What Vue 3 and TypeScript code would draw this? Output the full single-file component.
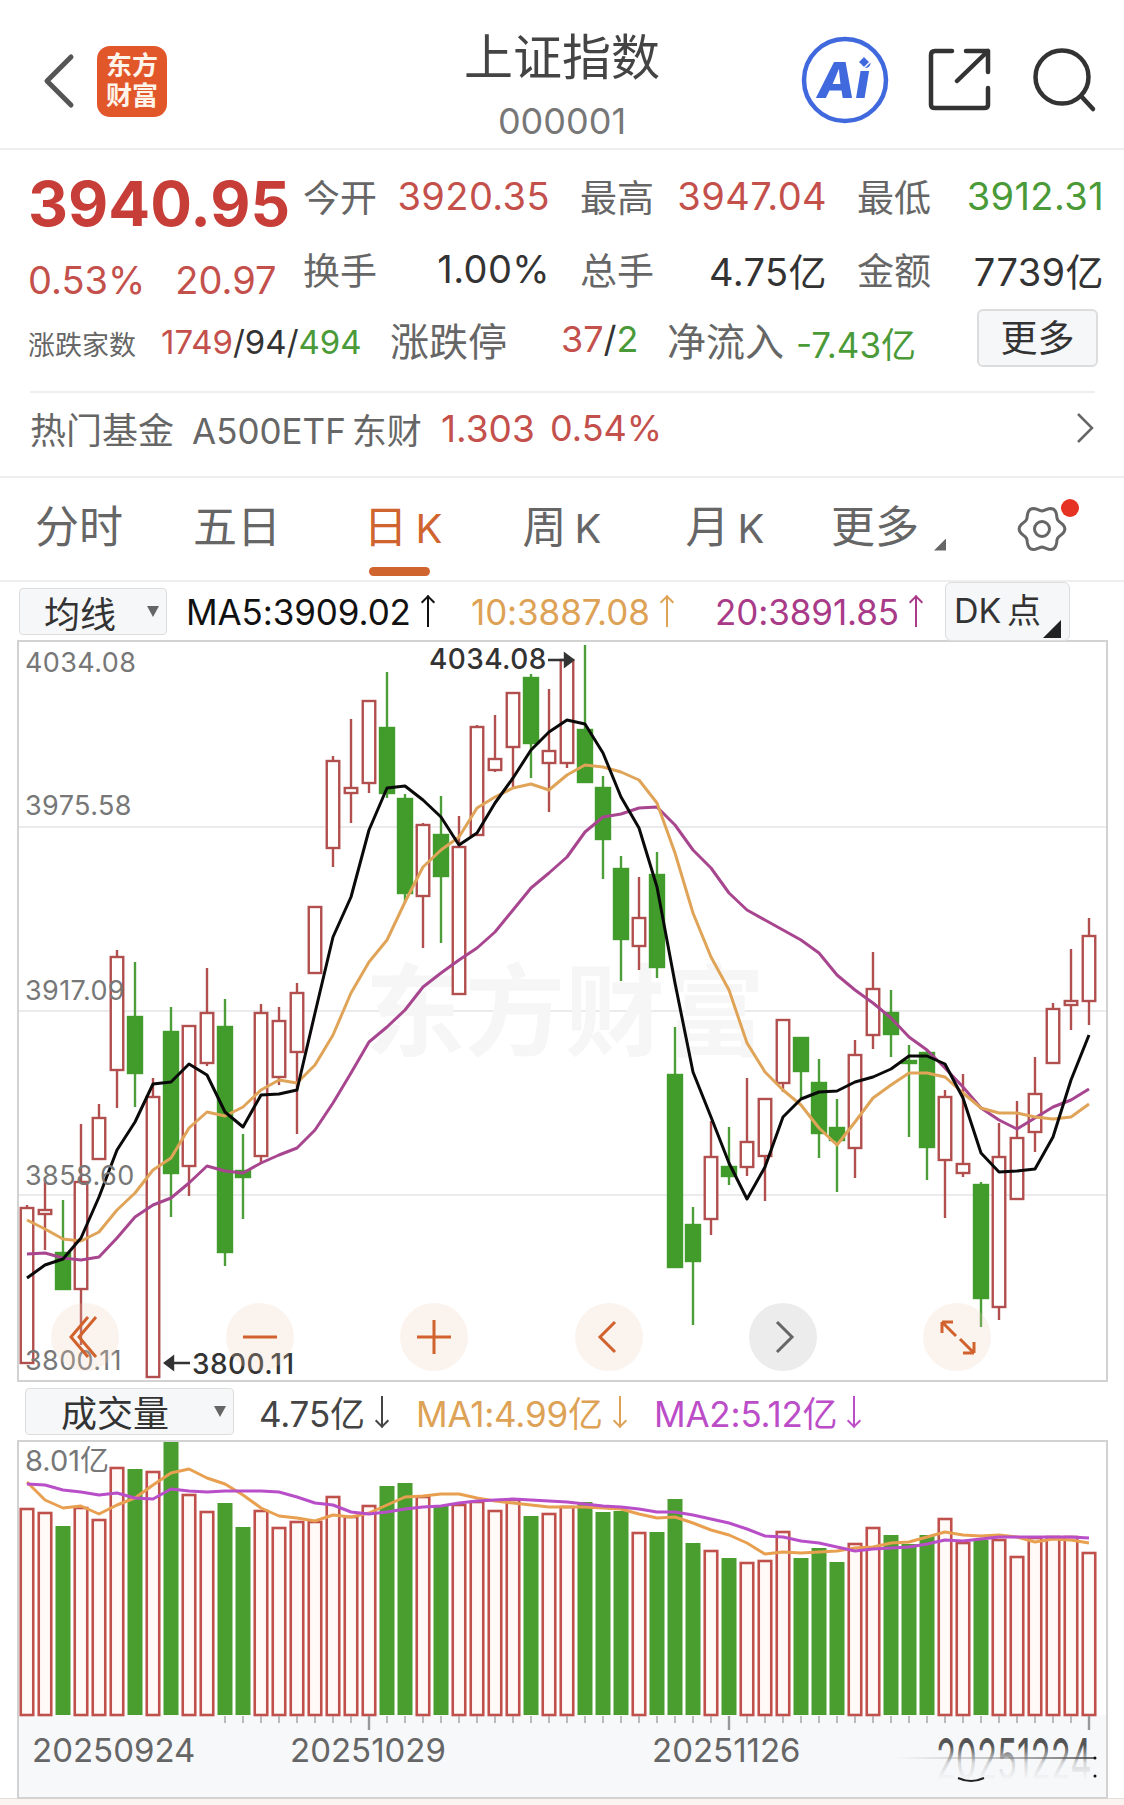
<template>
  <div class="page">
    <header class="top-bar">
      <div class="top-left">
        <svg class="back" width="34" height="56" viewBox="0 0 34 56">
          <path d="M30 4 L6 28 L30 52" fill="none" stroke="#555" stroke-width="5" stroke-linecap="round" stroke-linejoin="round" />
        </svg>
        <div class="logo"><span>东方</span><span>财富</span></div>
      </div>
      <div class="title-block">
        <div class="title">上证指数</div>
        <div class="code">000001</div>
      </div>
      <div class="top-right">
        <svg width="88" height="88" viewBox="0 0 88 88">
          <circle cx="44" cy="44" r="41" fill="none" stroke="#4169DE" stroke-width="4.5" />
          <text x="16" y="62" class="ai-text">Ai</text>
          <path d="M63 20 L69 26 L63 32 L57 26 Z" fill="#4169DE" stroke="#fff" stroke-width="1.5" />
        </svg>
        <svg class="share" width="64" height="64" viewBox="0 0 64 64">
          <path d="M24 3 H7 Q3 3 3 7 V57 Q3 60 7 60 H56 Q60 60 60 57 V40 M38 3 H60 V24 M60 3 L29 33" fill="none" stroke="#333" stroke-width="4.5" stroke-linecap="round" stroke-linejoin="round" />
        </svg>
        <svg class="search" width="66" height="66" viewBox="0 0 66 66">
          <circle cx="31" cy="30" r="26.5" fill="none" stroke="#333" stroke-width="4.5" />
          <path d="M50 49 L62 62" stroke="#333" stroke-width="4.5" stroke-linecap="round" />
        </svg>
      </div>
    </header>

    <section class="quote">
      <div class="quote-top">
        <div class="quote-left">
          <div class="price">3940.95</div>
          <div class="change"><span>0.53%</span><span>20.97</span></div>
        </div>
        <div class="quote-grid">
          <div v-for="item in stats" :key="item.label" class="stat">
            <span class="stat-label">{{ item.label }}</span>
            <span class="stat-value" :class="item.tone">{{ item.value }}</span>
          </div>
        </div>
      </div>
      <div class="quote-third">
        <span class="small-label">涨跌家数</span>
        <span class="counts"><i class="up">1749</i>/94/<i class="down">494</i></span>
        <span class="mid-label">涨跌停</span>
        <span class="limit"><i class="up">37</i>/<i class="down">2</i></span>
        <span class="flow-label">净流入</span>
        <span class="flow-value down">-7.43亿</span>
        <button class="more-btn">更多</button>
      </div>
      <div class="fund-row">
        <span class="fund-label">热门基金</span>
        <span class="fund-name">A500ETF 东财</span>
        <span class="fund-price up">1.303</span>
        <span class="fund-pct up">0.54%</span>
        <svg class="fund-arrow" width="20" height="32" viewBox="0 0 20 32">
          <path d="M3 2 L17 16 L3 30" fill="none" stroke="#666" stroke-width="2.5" />
        </svg>
      </div>
    </section>

    <nav class="tabs">
      <div class="tab">分时</div>
      <div class="tab">五日</div>
      <div class="tab active">日<span class="tab-k">K</span><b class="tab-line"></b></div>
      <div class="tab">周<span class="tab-k">K</span></div>
      <div class="tab">月<span class="tab-k">K</span></div>
      <div class="tab tab-more">更多<i class="tab-tri"></i></div>
      <svg class="gear" width="76" height="60" viewBox="0 0 76 60">
        <path :d="gearPath" fill="none" stroke="#666" stroke-width="3" />
        <circle cx="26" cy="33" r="7.5" fill="none" stroke="#666" stroke-width="3" />
        <circle cx="54" cy="12" r="9" fill="#E63222" />
      </svg>
    </nav>

    <div class="ma-row">
      <div class="select select-ma">均线<i class="select-arrow"></i></div>
      <span class="ma-item ma5">MA5:3909.02<i class="arrow up-arrow"></i></span>
      <span class="ma-item ma10">10:3887.08<i class="arrow up-arrow"></i></span>
      <span class="ma-item ma20">20:3891.85<i class="arrow up-arrow"></i></span>
      <div class="dk-btn">DK 点<i class="dk-tri"></i></div>
    </div>

    <div class="chart">
      <svg class="chart-svg" width="1089" height="740" viewBox="18 641 1089 740">
        <line v-for="y in gridLines" :key="y" x1="18" x2="1107" :y1="y" :y2="y" stroke="#ebebee" stroke-width="2" />
        <text x="365" y="1048" class="watermark">东方财富</text>
        <g v-for="c in candleRects" :key="c.x">
          <line :x1="c.x" :x2="c.x" :y1="c.high" :y2="c.low" :stroke="c.color" stroke-width="2.4" />
          <rect :x="c.x - c.w / 2" :y="c.top" :width="c.w" :height="c.h" :fill="c.fill" :stroke="c.stroke" stroke-width="2.4" />
        </g>
        <polyline :points="toPoints(ma20)" class="line" stroke="#A8458F" />
        <polyline :points="toPoints(ma10)" class="line" stroke="#E0A458" />
        <polyline :points="toPoints(ma5)" class="line" stroke="#0A0A0A" />
        <text v-for="t in priceLabels" :key="t.text" x="25" :y="t.y" class="axis-price">{{ t.text }}</text>

        <text x="429" y="669" class="mark">4034.08</text>
        <path d="M548 660 H572 M565 654 L573 660 L565 666 Z" fill="#333" stroke="#333" stroke-width="2.4" />
        <text x="192" y="1374" class="mark">3800.11</text>
        <path d="M190 1363 H166 M173 1357 L165 1363 L173 1369 Z" fill="#333" stroke="#333" stroke-width="2.4" />

        <g v-for="b in chartButtons" :key="b.x">
          <circle :cx="b.x" cy="1337" r="34" :fill="b.fill" />
          <path :d="b.d" fill="none" :stroke="b.stroke" stroke-width="3" />
        </g>
      </svg>
    </div>

    <div class="vol-row">
      <div class="select select-vol">成交量<i class="select-arrow"></i></div>
      <span class="vol-item vol-now">4.75亿<i class="arrow down-arrow"></i></span>
      <span class="vol-item vol-ma1">MA1:4.99亿<i class="arrow down-arrow"></i></span>
      <span class="vol-item vol-ma2">MA2:5.12亿<i class="arrow down-arrow"></i></span>
    </div>

    <div class="volume">
      <svg width="1089" height="357" viewBox="18 1441 1089 357">
        <defs>
          <linearGradient id="fade" x1="0" y1="0" x2="0" y2="1">
            <stop offset="0" stop-color="#f7f8fa" stop-opacity="0" />
            <stop offset="0.5" stop-color="#f7f8fa" stop-opacity="0.8" />
            <stop offset="1" stop-color="#f7f8fa" />
          </linearGradient>
          <linearGradient id="smear" x1="0" y1="0" x2="1" y2="0">
            <stop offset="0" stop-color="#999" stop-opacity="0" />
            <stop offset="0.3" stop-color="#999" stop-opacity="0.35" />
            <stop offset="1" stop-color="#444" stop-opacity="0.8" />
          </linearGradient>
        </defs>
        <rect x="18" y="1715" width="1089" height="83" fill="#f7f8fa" />
        <text x="25" y="1471" class="axis-vol">8.01亿</text>
        <rect v-for="b in volumeBars" :key="b.x" :x="b.x" :y="b.y" :width="b.w" :height="b.h" :fill="b.fill" :stroke="b.stroke" stroke-width="2.6" />
        <polyline :points="toPoints(volMa1)" class="line" stroke="#E8A050" />
        <polyline :points="toPoints(volMa2)" class="line" stroke="#B84FC8" />
        <line v-for="t in ticks" :key="t.x" :x1="t.x" :x2="t.x" y1="1716" :y2="t.y2" :stroke="t.major ? '#999' : '#aaa'" :stroke-width="t.major ? 2.4 : 1.6" />
        <text x="32" y="1762" class="date">20250924</text>
        <text x="290" y="1762" class="date">20251029</text>
        <text x="652" y="1762" class="date">20251126</text>
        <text x="936" y="1738" transform="translate(0 1738) scale(1 1.75) translate(0 -1738)" dy="24" class="date date-stretch">20251224</text>
        <rect x="892" y="1746" width="206" height="34" fill="url(#fade)" />
        <rect x="892" y="1780" width="206" height="18" fill="#f7f8fa" />
        <rect x="895" y="1757" width="200" height="2" fill="url(#smear)" />
        <path d="M958 1778 Q971 1784 984 1778" fill="none" stroke="#222" stroke-width="2" />
        <circle cx="1095" cy="1758" r="1.5" fill="#111" />
        <circle cx="1095" cy="1776" r="1.5" fill="#111" />
      </svg>
    </div>
    <div class="footer"></div>
  </div>
</template>

<script setup lang="ts">
import { computed } from 'vue'

const stats = [
  { label: '今开', value: '3920.35', tone: 'up' },
  { label: '最高', value: '3947.04', tone: 'up' },
  { label: '最低', value: '3912.31', tone: 'down' },
  { label: '换手', value: '1.00%', tone: '' },
  { label: '总手', value: '4.75亿', tone: '' },
  { label: '金额', value: '7739亿', tone: '' }
]

const gridLines = [827, 1011, 1195]
const priceLabels = [
  { text: '4034.08', y: 672 },
  { text: '3975.58', y: 815 },
  { text: '3917.09', y: 1000 },
  { text: '3858.60', y: 1185 },
  { text: '3800.11', y: 1370 }
]

const slot = (i: number) => 27 + 18 * i
const toPoints = (ys: number[]) => ys.map((y, i) => `${slot(i)},${y}`).join(' ')

// high, body top, body bottom, low, 1 = up (hollow red) / 0 = down (solid green)
const candles: [number, number, number, number, number][] = [
  [1205, 1208, 1363, 1363, 1], [1177, 1210, 1214, 1250, 1], [1200, 1253, 1289, 1289, 0], [1124, 1182, 1289, 1345, 1],
  [1104, 1118, 1159, 1159, 1], [950, 957, 1070, 1108, 1], [962, 1017, 1073, 1107, 0], [1078, 1097, 1377, 1377, 1],
  [1007, 1032, 1173, 1217, 0], [1026, 1026, 1166, 1196, 1], [968, 1013, 1063, 1066, 1], [999, 1027, 1252, 1266, 0],
  [1134, 1171, 1177, 1219, 0], [1004, 1013, 1156, 1163, 1], [1007, 1021, 1077, 1085, 1], [983, 993, 1052, 1134, 1],
  [907, 907, 973, 973, 1], [756, 761, 848, 867, 1], [719, 788, 793, 823, 1], [701, 701, 783, 793, 1],
  [672, 728, 793, 798, 0], [794, 799, 893, 903, 0], [823, 825, 896, 948, 1], [796, 835, 876, 943, 0],
  [816, 847, 994, 994, 1], [725, 727, 835, 835, 1], [715, 759, 770, 772, 1], [693, 693, 747, 788, 1],
  [674, 678, 743, 778, 0], [689, 751, 763, 812, 1], [660, 660, 763, 768, 1], [645, 730, 782, 782, 0],
  [776, 788, 839, 879, 0], [856, 869, 939, 981, 0], [877, 918, 946, 970, 1], [852, 875, 967, 978, 0],
  [1027, 1075, 1267, 1267, 0], [1207, 1225, 1261, 1325, 0], [1121, 1157, 1219, 1235, 1], [1127, 1167, 1176, 1185, 0],
  [1078, 1142, 1167, 1176, 1], [1099, 1099, 1156, 1201, 1], [1020, 1020, 1083, 1092, 1], [1037, 1038, 1071, 1098, 0],
  [1059, 1083, 1133, 1158, 0], [1099, 1128, 1140, 1192, 0], [1040, 1055, 1148, 1178, 1], [952, 989, 1035, 1049, 1],
  [990, 1013, 1034, 1057, 0], [1045, 1061, 1063, 1137, 0], [1049, 1053, 1147, 1180, 0], [1090, 1097, 1160, 1218, 1],
  [1074, 1164, 1173, 1177, 1], [1182, 1185, 1298, 1327, 0], [1123, 1157, 1307, 1320, 1], [1101, 1138, 1199, 1199, 1],
  [1057, 1094, 1132, 1152, 1], [1003, 1009, 1063, 1063, 1], [949, 1001, 1005, 1030, 1], [918, 936, 1001, 1025, 1]
]

const candleRects = computed(() =>
  candles.map(([high, top, bottom, low, up], i) => ({
    x: slot(i),
    high,
    low,
    top,
    h: bottom - top,
    w: up ? 12.5 : 14,
    color: up ? '#B14F4E' : '#4C9E38',
    fill: up ? '#fff' : '#419C2C',
    stroke: up ? '#B14F4E' : '#419C2C'
  }))
)

const ma5 = [
  1278, 1265, 1259, 1238, 1197, 1150, 1122, 1084, 1082, 1064, 1075, 1112, 1127, 1095, 1094, 1090, 1013, 937, 897, 830,
  788, 786, 800, 817, 845, 833, 803, 778, 750, 732, 720, 724, 753, 797, 828, 887, 983, 1072, 1117, 1163,
  1199, 1167, 1117, 1099, 1092, 1091, 1082, 1077, 1069, 1056, 1056, 1064, 1098, 1153, 1172, 1171, 1169, 1137, 1080, 1035
]
const ma10 = [
  1220, 1229, 1239, 1241, 1232, 1210, 1193, 1170, 1158, 1128, 1112, 1116, 1107, 1090, 1080, 1083, 1065, 1035, 993, 962,
  940, 902, 867, 850, 837, 808, 797, 788, 784, 790, 775, 765, 767, 772, 780, 803, 853, 913, 957, 990,
  1043, 1072, 1090, 1105, 1128, 1145, 1122, 1098, 1085, 1073, 1073, 1077, 1093, 1108, 1113, 1113, 1117, 1119, 1117, 1104
]
const ma20 = [
  1254, 1253, 1258, 1260, 1257, 1238, 1217, 1205, 1198, 1183, 1166, 1171, 1173, 1163, 1155, 1148, 1130, 1103, 1073, 1042,
  1027, 1010, 987, 973, 960, 948, 932, 910, 888, 873, 857, 832, 817, 814, 808, 807, 825, 850, 868, 893,
  910, 920, 930, 940, 953, 975, 990, 1003, 1018, 1037, 1050, 1068, 1087, 1108, 1120, 1129, 1118, 1107, 1100, 1089
]

const volTops = [
  1509, 1513, 1526, 1508, 1520, 1468, 1469, 1472, 1441, 1495, 1512, 1503, 1527, 1511, 1528, 1522, 1522, 1497, 1517, 1506,
  1486, 1483, 1497, 1506, 1505, 1502, 1511, 1500, 1516, 1514, 1507, 1502, 1512, 1511, 1533, 1532, 1499, 1543, 1551, 1558,
  1563, 1561, 1532, 1558, 1548, 1562, 1544, 1528, 1535, 1544, 1535, 1519, 1543, 1540, 1540, 1557, 1538, 1537, 1537, 1553
]
const volMa1 = [
  1482, 1500, 1508, 1506, 1514, 1505, 1498, 1485, 1473, 1469, 1478, 1484, 1495, 1508, 1516, 1518, 1521, 1515, 1517, 1513,
  1505, 1497, 1496, 1494, 1494, 1498, 1501, 1503, 1505, 1507, 1507, 1507, 1508, 1509, 1514, 1518, 1517, 1523, 1530, 1535,
  1543, 1554, 1552, 1553, 1552, 1551, 1548, 1547, 1543, 1542, 1537, 1532, 1535, 1536, 1535, 1537, 1542, 1539, 1540, 1543
]
const volMa2 = [
  1484, 1485, 1490, 1492, 1495, 1493, 1498, 1499, 1489, 1491, 1492, 1491, 1491, 1491, 1492, 1497, 1503, 1505, 1512, 1514,
  1512, 1509, 1507, 1506, 1503, 1501, 1500, 1499, 1500, 1501, 1502, 1504, 1506, 1507, 1509, 1512, 1512, 1515, 1519, 1523,
  1529, 1536, 1537, 1541, 1543, 1547, 1551, 1549, 1548, 1547, 1544, 1540, 1541, 1539, 1537, 1537, 1537, 1537, 1537, 1538
]

const volumeBars = computed(() =>
  volTops.map((top, i) => {
    const up = candles[i][4] === 1
    const w = up ? 12.5 : 15
    return {
      x: slot(i) - w / 2,
      y: top,
      w,
      h: 1715 - top,
      fill: up ? '#FFF9F8' : '#4A9E2F',
      stroke: up ? '#C0504C' : 'none'
    }
  })
)

const ticks = computed(() =>
  Array.from({ length: 49 }, (_, k) => {
    const i = k + 11
    const major = i === 19 || i === 39 || i === 59
    return { x: slot(i), y2: major ? 1730 : 1723, major }
  })
)

const chartButtons = [
  { x: 85, fill: 'rgba(240,205,185,0.24)', stroke: '#D2622D', d: 'M88 1317 L71 1337 L88 1357 M96 1317 L79 1337 L96 1357' },
  { x: 260, fill: 'rgba(240,205,185,0.24)', stroke: '#D2622D', d: 'M243 1337 H277' },
  { x: 434, fill: 'rgba(240,205,185,0.24)', stroke: '#D2622D', d: 'M417 1337 H451 M434 1320 V1354' },
  { x: 609, fill: 'rgba(240,205,185,0.24)', stroke: '#D2622D', d: 'M615 1322 L600 1337 L615 1352' },
  { x: 783, fill: '#ececec', stroke: '#666', d: 'M777 1322 L792 1337 L777 1352' },
  { x: 957, fill: 'rgba(240,205,185,0.24)', stroke: '#D2622D', d: 'M942 1322 L956 1336 M942 1322 H953 M942 1322 V1333 M974 1353 L960 1339 M974 1353 H963 M974 1353 V1342' }
]

const gearPath = computed(() => {
  const pts: string[] = []
  for (let a = 0; a < 360; a += 6) {
    const t = (a * Math.PI) / 180
    const r = 20.5 + 2.4 * Math.cos(6 * t)
    pts.push(`${(26 + r * Math.cos(t)).toFixed(1)} ${(33 + r * Math.sin(t)).toFixed(1)}`)
  }
  return `M${pts.join(' L')} Z`
})
</script>

<style scoped>
.page {
  width: 1124px;
  height: 1805px;
  overflow: hidden;
  background: #fff;
  font-family: Inter, "Noto Sans CJK SC", sans-serif;
  color: #333;
}

i {
  font-style: normal;
}

svg {
  display: block;
}

.up {
  color: #C4504C;
}

.down {
  color: #4A9A38;
}

.top-bar {
  height: 148px;
  display: grid;
  grid-template-columns: 1fr auto 1fr;
  border-bottom: 2px solid #eee;
  align-items: center;
}

.top-left {
  display: flex;
  align-items: center;
  padding-left: 41px;
  gap: 22px;
  margin-top: 14px;
}

.logo {
  width: 70px;
  height: 71px;
  border-radius: 13px;
  background: #E2572A;
  color: #fff4ea;
  font-size: 26px;
  font-weight: 700;
  line-height: 30px;
  display: flex;
  flex-direction: column;
  align-items: center;
  justify-content: center;
}

.title-block {
  display: flex;
  flex-direction: column;
  align-items: center;
  padding-top: 20px;
}

.title {
  font-size: 49px;
  line-height: 66px;
  color: #444;
}

.code {
  font-size: 36px;
  line-height: 46px;
  color: #777;
  margin-top: 7px;
}

.top-right {
  display: flex;
  align-items: center;
  justify-content: flex-end;
  padding-right: 27px;
  margin-top: 12px;
}

.ai-text {
  font-family: Inter, sans-serif;
  font-size: 50px;
  font-weight: 800;
  font-style: italic;
  fill: #4169DE;
}

.share {
  margin-left: 39px;
}

.search {
  margin-left: 39px;
}

.quote {
  height: 326px;
  border-bottom: 2px solid #eee;
  box-sizing: content-box;
}

.quote-top {
  display: flex;
  padding: 20px 0 0 28px;
}

.quote-left {
  width: 275px;
}

.price {
  font-size: 62px;
  font-weight: 700;
  line-height: 68px;
  color: #C73E38;
}

.change {
  display: flex;
  gap: 30px;
  margin-top: 21px;
  font-size: 38px;
  line-height: 42px;
  color: #C4504C;
}

.quote-grid {
  display: grid;
  grid-template-columns: repeat(3, 247px);
  grid-auto-rows: 73px;
  column-gap: 30px;
}

.stat {
  display: flex;
  justify-content: space-between;
  align-items: center;
  height: 52px;
}

.stat-label {
  font-size: 37px;
  color: #666;
}

.stat-value {
  font-size: 38px;
  letter-spacing: 0.4px;
}

.quote-third {
  display: flex;
  align-items: center;
  height: 60px;
  margin-top: -7px;
  padding-left: 28px;
}

.small-label {
  font-size: 27px;
  color: #666;
  width: 133px;
  padding-top: 8px;
}

.counts {
  font-size: 33px;
  width: 229px;
  padding-top: 6px;
}

.mid-label {
  font-size: 39px;
  color: #666;
  width: 171px;
}

.limit {
  font-size: 36px;
  width: 106px;
}

.flow-label {
  font-size: 39px;
  color: #666;
  width: 129px;
}

.flow-value {
  font-size: 35px;
  width: 181px;
  padding-top: 6px;
}

.more-btn {
  width: 121px;
  height: 58px;
  border: 2px solid #ddd;
  border-radius: 6px;
  background: #f6f7f9;
  color: #333;
  font: inherit;
  font-size: 37px;
  line-height: 1;
  padding: 0;
  margin-top: -2px;
}

.fund-row {
  display: flex;
  align-items: center;
  height: 70px;
  margin: 22px 29px 0 30px;
  border-top: 2px solid #eee;
  color: #666;
}

.fund-label {
  font-size: 36px;
  width: 162px;
}

.fund-name {
  font-size: 35px;
  width: 249px;
  word-spacing: -4px;
}

.fund-price {
  font-size: 37px;
  width: 109px;
}

.fund-pct {
  font-size: 36px;
}

.fund-arrow {
  margin-left: auto;
}

.tabs {
  height: 102px;
  display: grid;
  grid-template-columns: 158px 158px 178px 136px 190px 110px auto;
  align-items: center;
  justify-items: center;
  border-bottom: 2px solid #eee;
}

.tab {
  position: relative;
  font-size: 44px;
  color: #666;
  line-height: 1;
  margin-top: -5px;
}

.tab-k {
  margin-left: 8px;
  font-size: 40px;
}

.tab.active {
  color: #D0642F;
  margin-left: -4px;
}

.tab-line {
  position: absolute;
  left: 5px;
  right: 12px;
  bottom: -27px;
  height: 9px;
  border-radius: 5px;
  background: #D0642F;
}

.tab-tri {
  position: absolute;
  right: -27px;
  bottom: -2px;
  width: 12px;
  height: 12px;
  background: #666;
  clip-path: polygon(100% 0, 100% 100%, 0 100%);
}

.gear {
  margin-left: 53px;
  margin-top: -6px;
}

.ma-row {
  height: 59px;
  display: flex;
  align-items: center;
  padding-left: 19px;
}

.select {
  position: relative;
  box-sizing: border-box;
  height: 47px;
  border: 1.5px solid #ddd;
  border-radius: 4px;
  background: #f6f7f9;
  font-size: 36px;
  color: #333;
  display: flex;
  align-items: center;
}

.select-arrow {
  position: absolute;
  right: 7px;
  top: 17px;
  border-left: 6px solid transparent;
  border-right: 6px solid transparent;
  border-top: 11px solid #666;
}

.select-ma {
  width: 148px;
  padding-left: 24px;
}

.ma-item {
  display: inline-flex;
  align-items: center;
  font-size: 35px;
  letter-spacing: -0.1px;
}

.ma5 {
  color: #111;
  width: 285px;
  margin-left: 19px;
}

.ma10 {
  color: #DDA255;
  width: 244px;
}

.ma20 {
  color: #A83A88;
  width: 230px;
}

.arrow {
  position: relative;
  display: inline-block;
  width: 2px;
  height: 30px;
  background: currentColor;
  margin-left: 16px;
}

.arrow::after {
  content: "";
  position: absolute;
  left: -5px;
  width: 10px;
  height: 10px;
  border-left: 2px solid currentColor;
  border-top: 2px solid currentColor;
  box-sizing: border-box;
  transform: translateX(1px) rotate(45deg);
}

.up-arrow::after {
  top: 0;
}

.down-arrow::after {
  bottom: 0;
  transform: translateX(1px) rotate(225deg);
}

.dk-btn {
  position: relative;
  box-sizing: border-box;
  width: 125px;
  height: 59px;
  border: 1.5px solid #ddd;
  border-radius: 6px;
  background: #f6f7f9;
  font-size: 34px;
  padding-left: 8px;
  line-height: 56px;
  white-space: nowrap;
  word-spacing: -4px;
}

.dk-tri {
  position: absolute;
  right: 8px;
  bottom: 2px;
  width: 18px;
  height: 18px;
  background: #222;
  clip-path: polygon(100% 0, 100% 100%, 0 100%);
}

.chart {
  box-sizing: border-box;
  width: 1089px;
  height: 740px;
  margin-left: 18px;
  outline: 2px solid #d2d2d2;
  outline-offset: -1px;
}

.watermark {
  font-size: 100px;
  font-weight: 700;
  fill: #f6f6f6;
}

.axis-price {
  font-size: 27px;
  letter-spacing: 0.4px;
  fill: #777;
}

.axis-vol {
  font-size: 29px;
  fill: #777;
}

.mark {
  font-size: 28px;
  font-weight: 500;
  letter-spacing: 0.4px;
  fill: #333;
}

.line {
  fill: none;
  stroke-width: 3;
  stroke-linejoin: round;
}

.vol-row {
  height: 60px;
  display: flex;
  align-items: center;
}

.select-vol {
  width: 209px;
  margin-left: 25px;
  padding-left: 35px;
}

.vol-item {
  display: inline-flex;
  align-items: center;
  font-size: 35px;
  letter-spacing: -0.2px;
}

.vol-now {
  color: #444;
  margin-left: 25px;
  width: 157px;
}

.vol-ma1 {
  color: #DDA255;
  width: 238px;
}

.vol-ma2 {
  color: #BC4DC8;
}

.volume {
  width: 1089px;
  height: 357px;
  margin-left: 18px;
  outline: 2px solid #d2d2d2;
  outline-offset: -1px;
}

.date {
  font-size: 33px;
  fill: #666;
}

.date-stretch {
  fill: #555;
}

.footer {
  height: 7px;
  background: #fbf3ef;
  border-top: 1.5px solid #e4e0de;
}
</style>
